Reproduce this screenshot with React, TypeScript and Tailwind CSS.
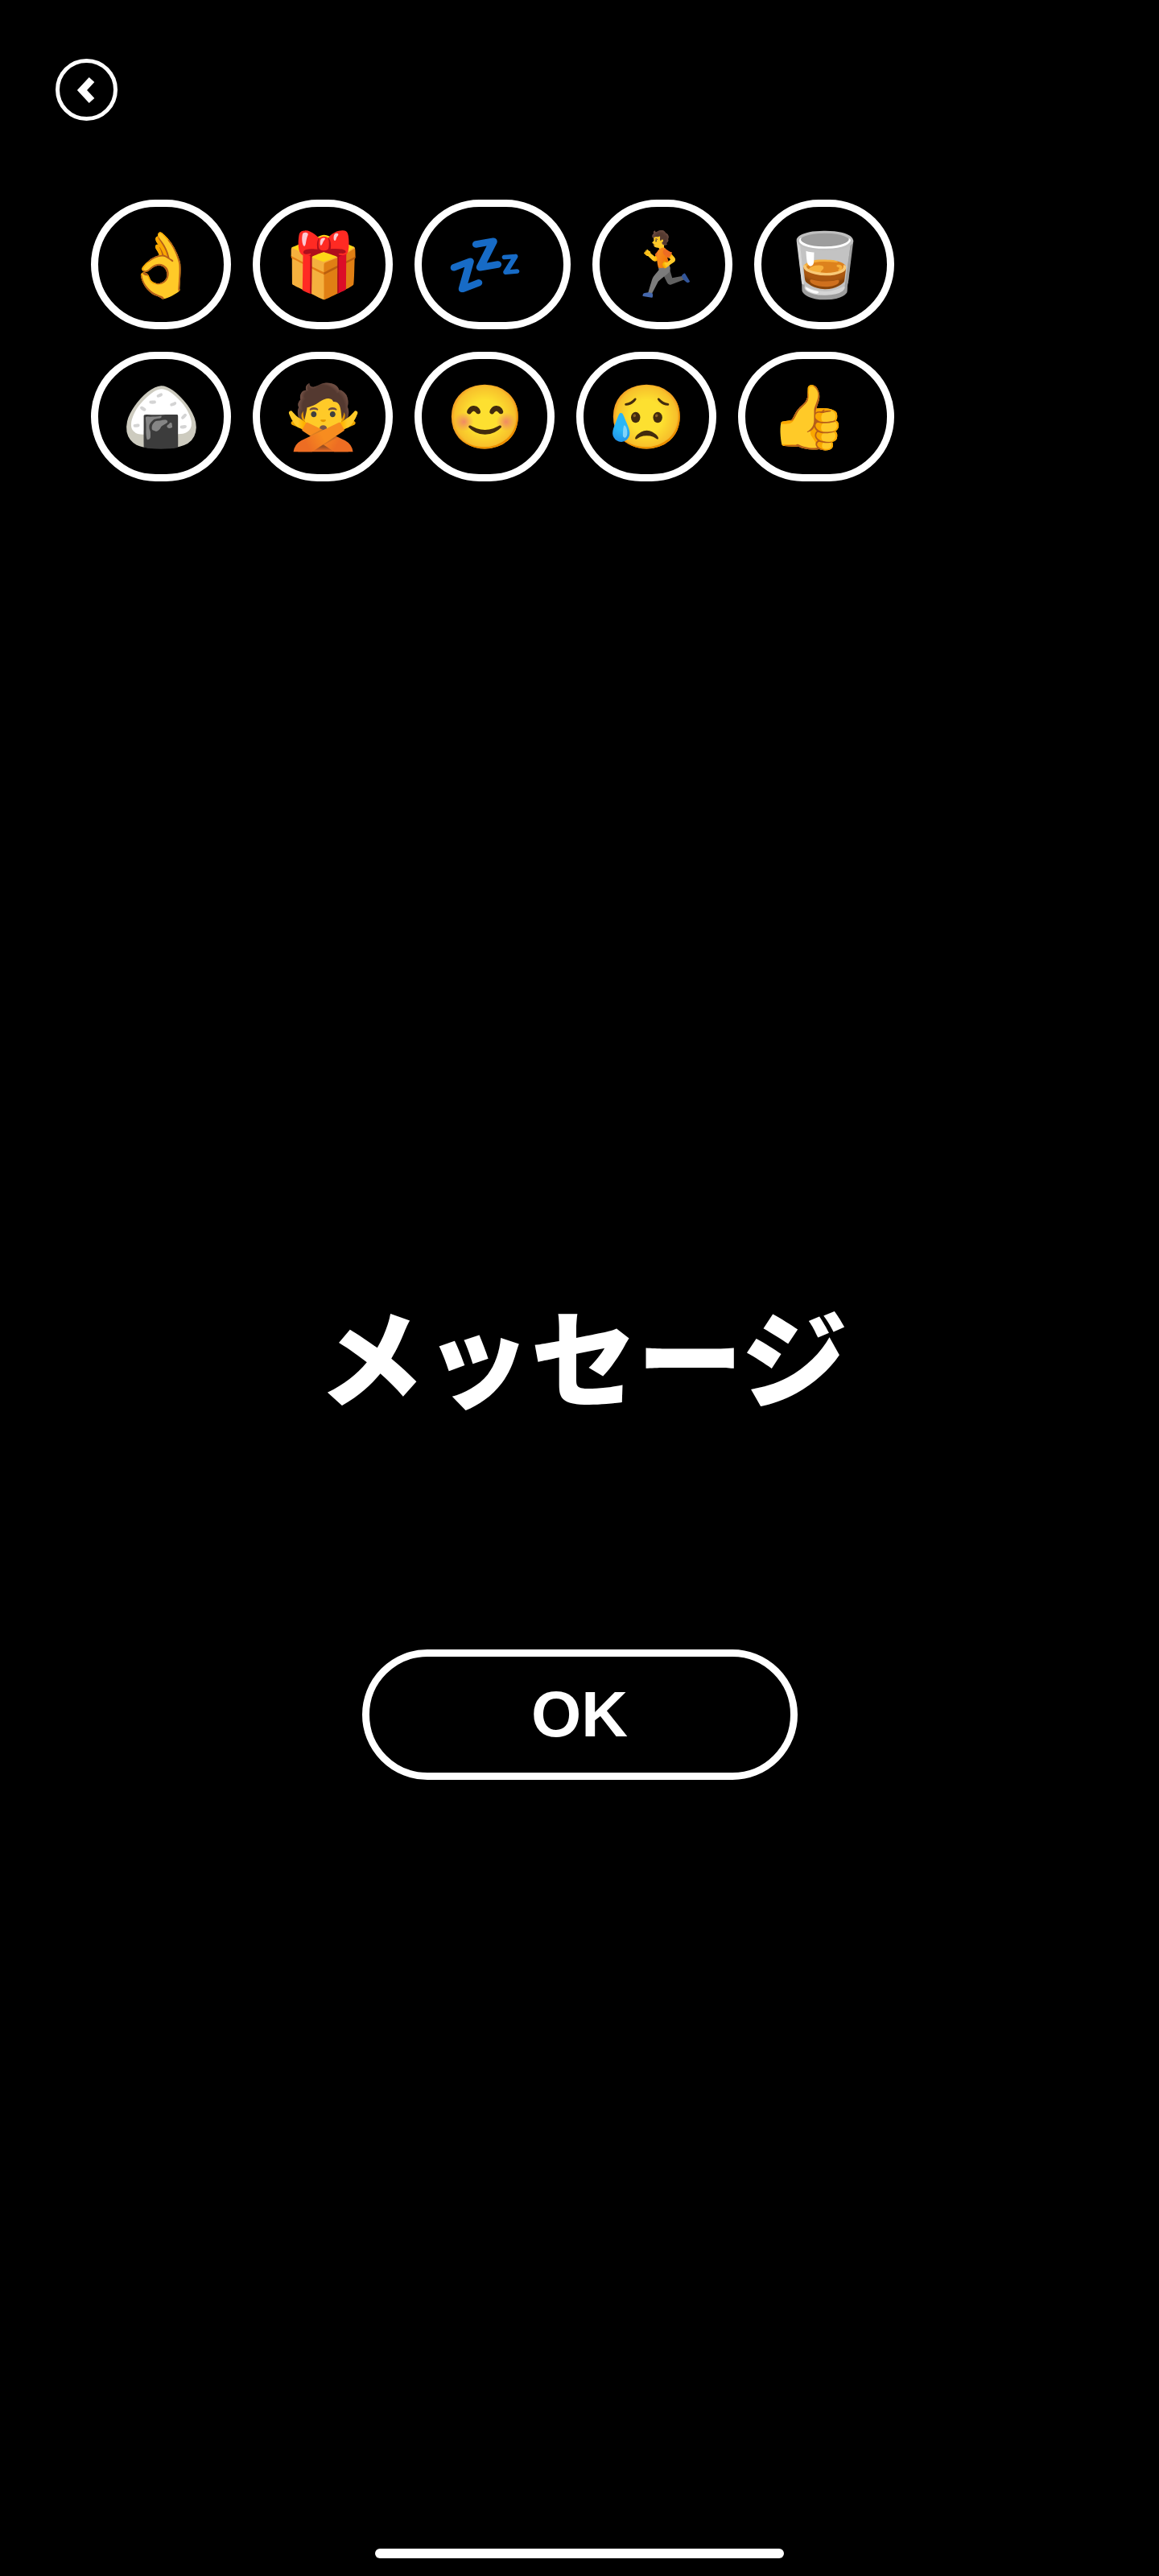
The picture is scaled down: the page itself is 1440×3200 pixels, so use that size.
import React from 'react';

const row1 = [
  { emoji: '👌', w: 'w-[174px]' },
  { emoji: '🎁', w: 'w-[174px]' },
  { emoji: '💤', w: 'w-[194px] pr-[20px]' },
  { emoji: '🏃', w: 'w-[174px]' },
  { emoji: '🥃', w: 'w-[174px]' },
];

const row2 = [
  { emoji: '🍙', w: 'w-[174px]' },
  { emoji: '🙅', w: 'w-[174px]' },
  { emoji: '😊', w: 'w-[174px]' },
  { emoji: '😥', w: 'w-[174px]' },
  { emoji: '👍', w: 'w-[194px] pr-[20px]' },
];

const Chip = ({ emoji, w }: { emoji: string; w: string }) => (
  <div className={`${w} h-[161px] rounded-full border-[9px] border-white flex items-center justify-center text-[78px] leading-none`}>
    {emoji}
  </div>
);

export default function App() {
  return (
    <div className="w-[1440px] h-[3200px] bg-black text-white flex flex-col font-['Liberation_Sans',sans-serif]">
      <div className="pl-[69px] pt-[73px]">
        <button className="w-[77px] h-[77px] rounded-full border-[5px] border-white flex items-center justify-center">
          <svg width="26" height="34" viewBox="0 0 26 34" fill="none">
            <path d="M19 4 L7 17 L19 30" stroke="white" strokeWidth="9" />
          </svg>
        </button>
      </div>
      <div className="pl-[113px] pt-[98px] flex flex-col gap-[28px]">
        <div className="flex gap-[27px]">
          {row1.map((c) => <Chip key={c.emoji} {...c} />)}
        </div>
        <div className="flex gap-[27px]">
          {row2.map((c) => <Chip key={c.emoji} {...c} />)}
        </div>
      </div>
      <h1 className="mt-[1013px] pl-[8px] text-center text-[132px] leading-[140px] font-black font-['Noto_Sans_CJK_JP',sans-serif]">
        メッセージ
      </h1>
      <button className="mt-[298px] mx-auto w-[541px] h-[162px] shrink-0 rounded-full border-[9px] border-white text-[80px] font-bold">
        OK
      </button>
      <div className="mt-[955px] mx-auto w-[508px] h-[12px] shrink-0 rounded-full bg-white" />
    </div>
  );
}
